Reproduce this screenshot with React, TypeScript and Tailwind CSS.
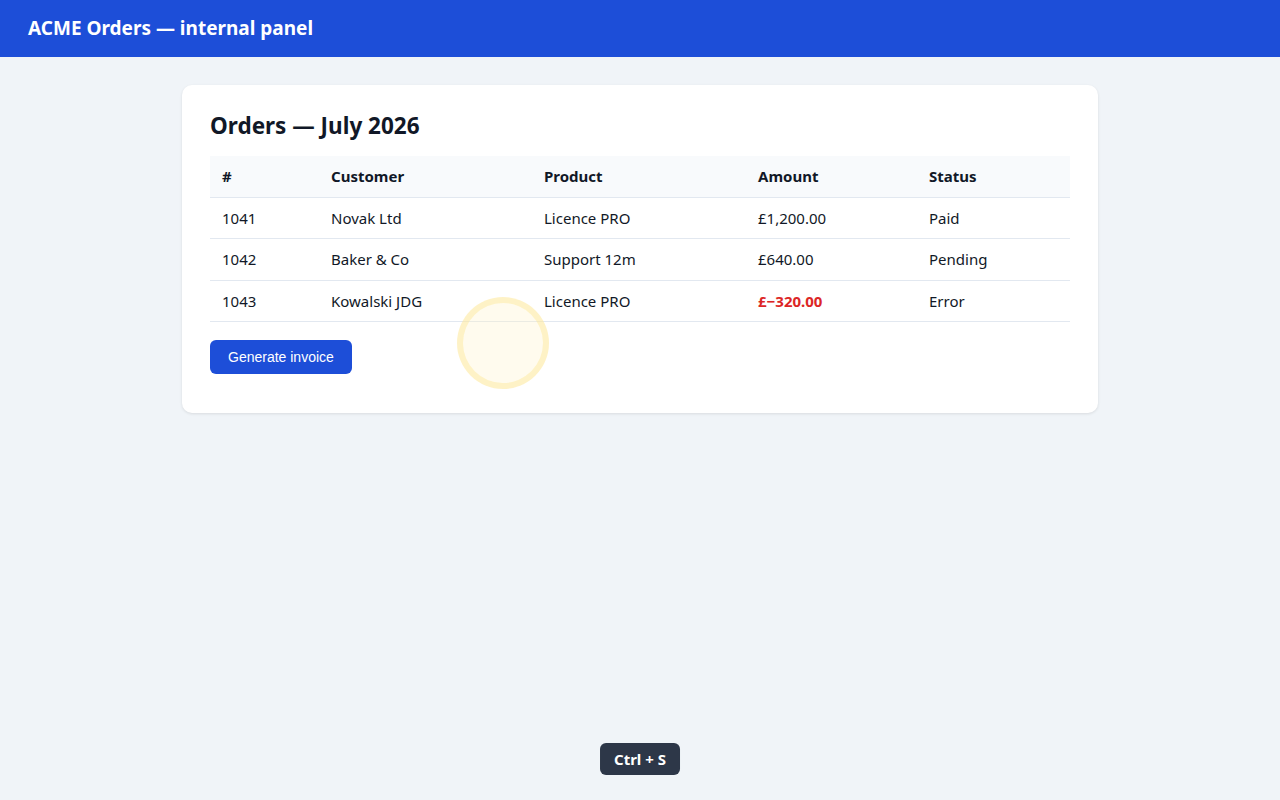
import React from 'react';

interface Order {
  id: number;
  customer: string;
  product: string;
  amount: string;
  status: 'Paid' | 'Pending' | 'Error';
}

const orders: Order[] = [
  { id: 1041, customer: 'Novak Ltd', product: 'Licence PRO', amount: '£1,200.00', status: 'Paid' },
  { id: 1042, customer: 'Baker & Co', product: 'Support 12m', amount: '£640.00', status: 'Pending' },
  { id: 1043, customer: 'Kowalski JDG', product: 'Licence PRO', amount: '£−320.00', status: 'Error' },
];

const App: React.FC = () => {
  return (
    <div className="min-h-screen bg-[#f0f4f8] font-['Noto_Sans',sans-serif] text-[#111827]">
      {/* Top bar */}
      <header className="h-[57px] bg-[#1d4ed8] flex items-center px-7">
        <h1 className="text-[19px] font-bold text-white">ACME Orders — internal panel</h1>
      </header>

      <main className="pt-7 flex justify-center">
        <section className="relative w-[916px] bg-white rounded-[10px] shadow-[0_1px_3px_rgba(0,0,0,0.1)] px-7 pt-[23px] pb-[39px]">
          <h2 className="text-[22.5px] leading-[36px] font-bold text-[#111827] mb-[12px]">Orders — July 2026</h2>

          <table className="w-full border-collapse text-[15px] text-left">
            <thead>
              <tr className="bg-[#f8fafc] border-b border-[#e2e8f0] h-[41px]">
                <th className="w-[109px] px-3 font-bold">#</th>
                <th className="w-[213px] px-3 font-bold">Customer</th>
                <th className="w-[214px] px-3 font-bold">Product</th>
                <th className="w-[171px] px-3 font-bold">Amount</th>
                <th className="px-3 font-bold">Status</th>
              </tr>
            </thead>
            <tbody>
              {orders.map((o) => (
                <tr key={o.id} className="border-b border-[#e2e8f0] h-[41.5px]">
                  <td className="px-3">{o.id}</td>
                  <td className="px-3">{o.customer}</td>
                  <td className="px-3">{o.product}</td>
                  <td className={o.status === 'Error' ? 'px-3 font-bold text-[#dc2626]' : 'px-3'}>{o.amount}</td>
                  <td className="px-3">{o.status}</td>
                </tr>
              ))}
            </tbody>
          </table>

          <button className="mt-[18px] h-[34px] px-[18px] rounded-[6px] bg-[#1d4ed8] text-white text-[14px] font-['Liberation_Sans',Arial,sans-serif]">
            Generate invoice
          </button>

          {/* click indicator */}
          <div className="absolute left-[275px] top-[212px] w-[92px] h-[92px] rounded-full border-[6px] border-[#fde68a]/40 bg-[#fef3c7]/30 pointer-events-none" />
        </section>
      </main>

      {/* shortcut hint */}
      <div className="fixed bottom-[25px] left-1/2 -translate-x-1/2 h-[32px] px-[14px] flex items-center rounded-[6px] bg-[#2d3748] text-white text-[15px] font-bold">
        Ctrl + S
      </div>
    </div>
  );
};

export default App;
